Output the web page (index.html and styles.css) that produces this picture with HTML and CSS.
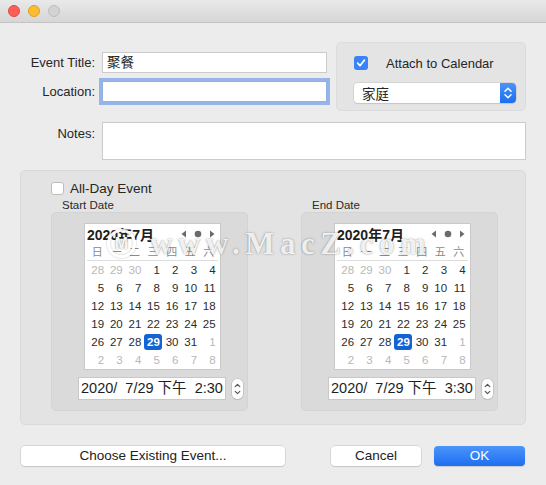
FILE: index.html
```html
<!DOCTYPE html>
<html>
<head>
<meta charset="utf-8">
<link rel="stylesheet" href="styles.css">
</head>
<body>
<div class="window">
  <div class="titlebar">
    <span class="light red"></span><span class="light yellow"></span><span class="light gray"></span>
  </div>
  <div class="content">
    <div class="top">
      <div class="fields">
        <div class="row"><span class="lbl">Event Title:</span><div class="input">聚餐</div></div>
        <div class="row row2"><span class="lbl">Location:</span><div class="input focus"></div></div>
      </div>
      <div class="side">
        <div class="check-row">
          <span class="cb checked"><svg width="14" height="14" viewBox="0 0 14 14"><path d="M3.6 7.2 L6 9.7 L10.4 4.1" fill="none" stroke="#fff" stroke-width="1.7" stroke-linecap="round" stroke-linejoin="round"/></svg></span>
          <span class="cb-text">Attach to Calendar</span>
        </div>
        <div class="popup">
          <span class="popup-val">家庭</span>
          <span class="popup-btn"><svg width="16" height="20" viewBox="0 0 16 20"><path d="M5 8.2 L8 5.2 L11 8.2 M5 11.8 L8 14.8 L11 11.8" fill="none" stroke="#fff" stroke-width="1.5" stroke-linecap="round" stroke-linejoin="round"/></svg></span>
        </div>
      </div>
    </div>
    <div class="notes-row"><span class="lbl notes-lbl">Notes:</span><div class="textarea"></div></div>
    <div class="group">
      <div class="allday"><span class="cb empty"></span><span class="allday-text">All-Day Event</span></div>
      <div class="dates">
        <div class="dcol">
          <div class="dlabel">Start Date</div>
          <div class="dbox">
            <div class="cal">
              <div class="cal-head">
                <span class="cal-title">2020年7月</span>
                <svg class="nav" width="34" height="10" viewBox="0 0 34 10"><path d="M5 1.5 L0.5 5 L5 8.5Z" fill="#6b6b6b"/><circle cx="17" cy="5" r="3.3" fill="#6b6b6b"/><path d="M29 1.5 L33.5 5 L29 8.5Z" fill="#6b6b6b"/></svg>
              </div>
              <div class="dow"><span>日</span><span>一</span><span>二</span><span>三</span><span>四</span><span>五</span><span>六</span></div>
              <div class="sep"></div>
              <div class="days">
                <span class="o">28</span><span class="o">29</span><span class="o">30</span><span>1</span><span>2</span><span>3</span><span>4</span>
                <span>5</span><span>6</span><span>7</span><span>8</span><span>9</span><span>10</span><span>11</span>
                <span>12</span><span>13</span><span>14</span><span>15</span><span>16</span><span>17</span><span>18</span>
                <span>19</span><span>20</span><span>21</span><span>22</span><span>23</span><span>24</span><span>25</span>
                <span>26</span><span>27</span><span>28</span><span class="sel">29</span><span>30</span><span>31</span><span class="o">1</span>
                <span class="o">2</span><span class="o">3</span><span class="o">4</span><span class="o">5</span><span class="o">6</span><span class="o">7</span><span class="o">8</span>
              </div>
            </div>
            <div class="dt-row">
              <div class="dt">2020/  7/29 下午  2:30</div>
              <div class="stepper"><svg width="11" height="20" viewBox="0 0 11 20"><path d="M3.2 7.6 L5.5 5.3 L7.8 7.6 M3.2 12.4 L5.5 14.7 L7.8 12.4" fill="none" stroke="#555" stroke-width="1.2" stroke-linecap="round" stroke-linejoin="round"/></svg></div>
            </div>
          </div>
        </div>
        <div class="dcol">
          <div class="dlabel">End Date</div>
          <div class="dbox">
            <div class="cal">
              <div class="cal-head">
                <span class="cal-title">2020年7月</span>
                <svg class="nav" width="34" height="10" viewBox="0 0 34 10"><path d="M5 1.5 L0.5 5 L5 8.5Z" fill="#6b6b6b"/><circle cx="17" cy="5" r="3.3" fill="#6b6b6b"/><path d="M29 1.5 L33.5 5 L29 8.5Z" fill="#6b6b6b"/></svg>
              </div>
              <div class="dow"><span>日</span><span>一</span><span>二</span><span>三</span><span>四</span><span>五</span><span>六</span></div>
              <div class="sep"></div>
              <div class="days">
                <span class="o">28</span><span class="o">29</span><span class="o">30</span><span>1</span><span>2</span><span>3</span><span>4</span>
                <span>5</span><span>6</span><span>7</span><span>8</span><span>9</span><span>10</span><span>11</span>
                <span>12</span><span>13</span><span>14</span><span>15</span><span>16</span><span>17</span><span>18</span>
                <span>19</span><span>20</span><span>21</span><span>22</span><span>23</span><span>24</span><span>25</span>
                <span>26</span><span>27</span><span>28</span><span class="sel">29</span><span>30</span><span>31</span><span class="o">1</span>
                <span class="o">2</span><span class="o">3</span><span class="o">4</span><span class="o">5</span><span class="o">6</span><span class="o">7</span><span class="o">8</span>
              </div>
            </div>
            <div class="dt-row">
              <div class="dt">2020/  7/29 下午  3:30</div>
              <div class="stepper"><svg width="11" height="20" viewBox="0 0 11 20"><path d="M3.2 7.6 L5.5 5.3 L7.8 7.6 M3.2 12.4 L5.5 14.7 L7.8 12.4" fill="none" stroke="#555" stroke-width="1.2" stroke-linecap="round" stroke-linejoin="round"/></svg></div>
            </div>
          </div>
        </div>
      </div>
    </div>
    <div class="buttons">
      <div class="btn choose">Choose Existing Event...</div>
      <div class="btn cancel">Cancel</div>
      <div class="btn ok">OK</div>
    </div>
  </div>
  <div class="watermark">
    <span class="wm-logo">M</span>
    <span class="wm-text">www.MacZ.com</span>
  </div>
</div>
</body>
</html>
```
FILE: styles.css
```css
* { box-sizing: border-box; }
html, body { margin: 0; padding: 0; }
body {
  width: 546px;
  height: 485px;
  overflow: hidden;
  background: #ececec;
  font-family: "Liberation Sans", "Noto Sans CJK SC", sans-serif;
  font-size: 13px;
  color: #262626;
}
.window { position: relative; width: 546px; height: 485px; background: #ececec; }

.titlebar {
  height: 23px;
  background: linear-gradient(#e9e9e9, #d6d6d6);
  border-bottom: 1px solid #c4c4c4;
  display: flex;
  align-items: center;
  padding: 0 0 1px 8px;
  gap: 8px;
}
.light { width: 12px; height: 12px; border-radius: 50%; display: block; }
.red { background: #fc5f57; border: 0.5px solid #de4a42; }
.yellow { background: #fdbc2f; border: 0.5px solid #dca026; }
.gray { background: #d3d3d3; border: 0.5px solid #bdbdbd; }

.content { padding: 19px 20px 0 20px; }

.top { display: flex; }
.fields { width: 307px; padding-top: 10px; }
.row { display: flex; align-items: center; height: 21px; }
.row2 { margin-top: 8px; }
.lbl { width: 75px; text-align: right; margin-right: 7px; flex: none; color: #262626; }
.input {
  width: 225px;
  height: 21px;
  background: #fff;
  border: 1px solid #cbcbcb;
  padding-left: 4px;
  line-height: 19px;
  font-size: 13.5px;
}
.focus { border-color: #8fb0e6; box-shadow: 0 0 0 3px rgba(115, 160, 232, 0.72); }

.side {
  margin-left: 9px;
  width: 190px;
  height: 69px;
  background: #e4e4e4;
  border: 1px solid #dcdcdc;
  border-radius: 5px;
  padding: 13px 0 0 17px;
}
.check-row { display: flex; align-items: center; height: 14px; }
.cb { width: 14px; height: 14px; border-radius: 3px; flex: none; display: block; }
.cb svg { display: block; }
.checked { background: #3a83f6; }
.cb-text { margin-left: 18px; font-size: 13px; }
.popup {
  margin-top: 13px;
  width: 162px;
  height: 20px;
  background: #fff;
  border-radius: 4px;
  box-shadow: 0 0 0 0.5px #c4c4c4, 0 1px 1px rgba(0,0,0,0.12);
  display: flex;
  align-items: center;
  justify-content: space-between;
}
.popup-val { padding-left: 8px; font-size: 13.5px; }
.popup-btn {
  width: 16px;
  height: 20px;
  border-radius: 0 4px 4px 0;
  background: linear-gradient(#4a93f9, #1b6ef0);
}
.popup-btn svg { display: block; }

.notes-row { display: flex; margin-top: 11px; }
.notes-lbl { padding-top: 4px; line-height: 16px; }
.textarea { width: 424px; height: 38px; background: #fff; border: 1px solid #cbcbcb; }

.group {
  margin-top: 10px;
  height: 255px;
  background: #e3e3e3;
  border: 1px solid #d9d9d9;
  border-radius: 5px;
  padding: 11px 0 0 30px;
}
.allday { display: flex; align-items: center; height: 13px; }
.empty { width: 13px; height: 13px; background: #fff; border: 1px solid #bdbdbd; border-radius: 3px; }
.allday-text { margin-left: 6px; font-size: 13.5px; }
.dates { display: flex; gap: 53px; margin-top: 3px; }
.dcol { width: 197px; }
.dlabel { height: 14px; line-height: 14px; padding-left: 11px; font-size: 11.5px; color: #2a2a2a; }
.dbox {
  height: 199px;
  background: #dadada;
  border: 1px solid #d4d4d4;
  border-radius: 5px;
  padding: 10px 0 0 32px;
}
.cal { width: 137px; height: 147px; background: #fff; border: 1px solid #c9c9c9; }
.cal-head { height: 20px; display: flex; align-items: center; justify-content: space-between; padding: 0 5px 0 2px; }
.cal-title { font-weight: bold; font-size: 14px; color: #1e1e1e; }
.nav { display: block; }
.dow, .days { display: grid; grid-template-columns: repeat(7, 18.6px); padding-left: 3px; }
.dow { height: 16px; line-height: 16px; font-size: 11px; color: #8a8a8a; text-align: center; }
.sep { height: 1px; background: #dedede; margin: 0 2px; }
.days span {
  display: block;
  height: 16px;
  margin: 1px 0;
  line-height: 16px;
  text-align: right;
  padding-right: 2.5px;
  font-size: 11.5px;
  color: #2b2b2b;
}
.days .o { color: #b8b8b8; }
.days .sel { background: #1363d6; color: #fff; font-weight: bold; border-radius: 3px; }

.dt-row { display: flex; align-items: center; margin-top: 7px; margin-left: -6px; }
.dt {
  width: 148px;
  height: 23px;
  background: #fff;
  border: 1px solid #c8c8c8;
  white-space: pre;
  font-size: 14.5px;
  line-height: 21px;
  padding-left: 2px;
  color: #1e1e1e;
}
.stepper {
  margin-left: 6px;
  width: 11px;
  height: 20px;
  border-radius: 5px;
  background: #fff;
  box-shadow: 0 0 0 0.5px #b3b3b3, 0 1px 1px rgba(0,0,0,0.12);
}
.stepper svg { display: block; }

.buttons { display: flex; margin-top: 21px; }
.btn {
  height: 20px;
  line-height: 20px;
  text-align: center;
  background: #fff;
  border-radius: 4px;
  box-shadow: 0 0 0 0.5px #c2c2c2, 0 1px 1px rgba(0,0,0,0.14);
  font-size: 13.5px;
  color: #222;
}
.choose { width: 264px; margin-left: 1px; }
.cancel { width: 90px; margin-left: 46px; }
.ok {
  width: 91px;
  margin-left: 13px;
  background: linear-gradient(#4c95fa, #1d6ef1);
  color: #fff;
  box-shadow: 0 1px 1px rgba(0,0,0,0.14);
}

.watermark {
  position: absolute;
  left: 107px;
  top: 228px;
  display: flex;
  align-items: center;
  pointer-events: none;
}
.wm-logo {
  width: 29px;
  height: 29px;
  border-radius: 50%;
  border: 3px solid rgba(255,255,255,0.9);
  color: rgba(255,255,255,0.95);
  font-family: "Liberation Sans", sans-serif;
  font-weight: bold;
  font-size: 16px;
  line-height: 23px;
  text-align: center;
  box-shadow: 0 0 2px rgba(0,0,0,0.3), inset 0 0 2px rgba(0,0,0,0.3);
  text-shadow: 0 0 1px rgba(0,0,0,0.4), 0 0 3px rgba(0,0,0,0.2);
}
.wm-text {
  margin-left: 14px;
  font-family: "Liberation Serif", serif;
  font-weight: bold;
  font-size: 31px;
  letter-spacing: 5.5px;
  color: rgba(255,255,255,0.88);
  text-shadow: 0 0 1px rgba(0,0,0,0.35), 0 0 3px rgba(0,0,0,0.2);
  line-height: 31px;
}
```
